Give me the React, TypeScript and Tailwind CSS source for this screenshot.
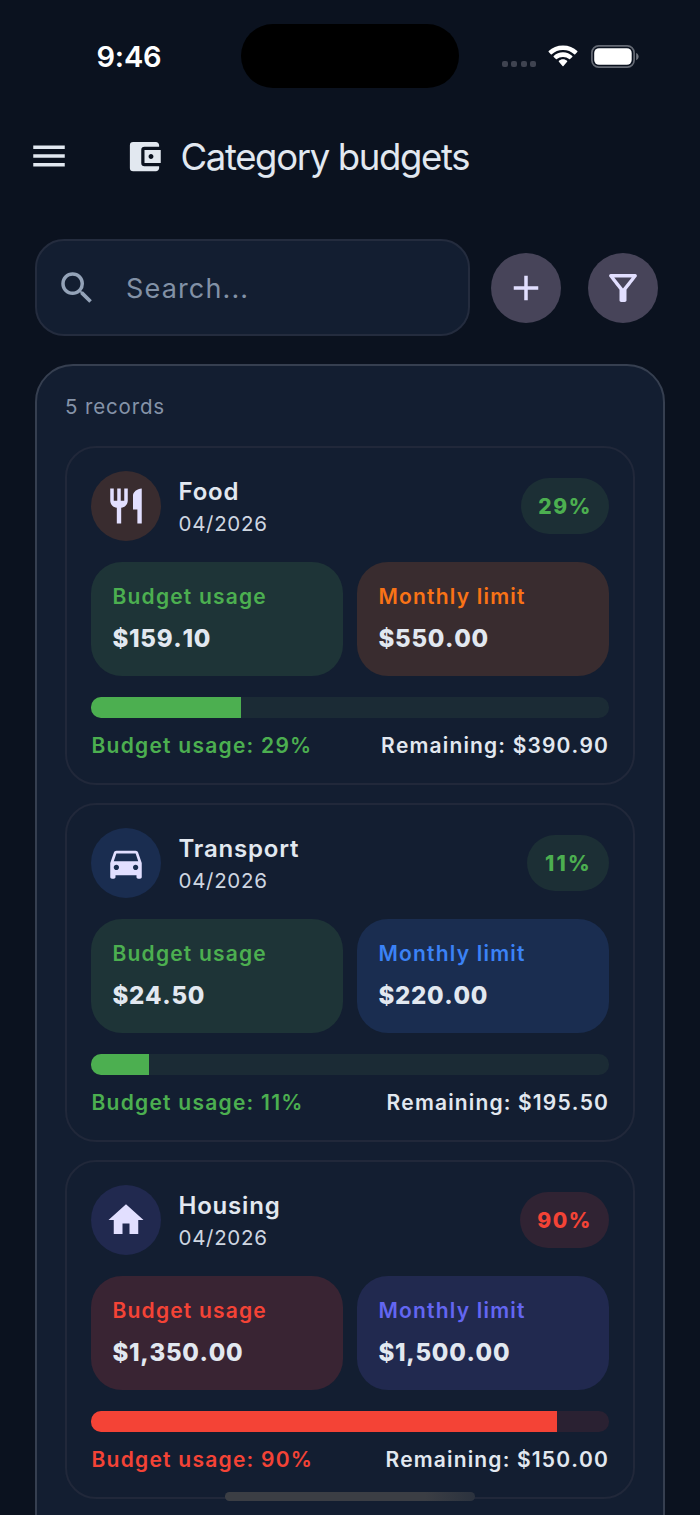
import {
  MdAccountBalanceWallet,
  MdAdd,
  MdDirectionsCar,
  MdHome,
  MdMenu,
  MdOutlineFilterAlt,
  MdRestaurant,
  MdSearch,
} from "react-icons/md";
import type { IconType } from "react-icons";

type Budget = {
  name: string;
  icon: IconType;
  percent: number;
  fill: number;
  used: string;
  limit: string;
  remaining: string;
  statusText: string;
  statusFill: string;
  statusTile: string;
  badge: string;
  badgeTracking: string;
  track: string;
  accentText: string;
  accentTile: string;
};

const green = {
  statusText: "text-[#4caf50]",
  statusFill: "bg-[#4caf50]",
  statusTile: "bg-[#1e3437]",
  badge: "bg-[#1c2f35]",
  track: "bg-[#1b2b35]",
};

const red = {
  statusText: "text-[#f44336]",
  statusFill: "bg-[#f44336]",
  statusTile: "bg-[#392433]",
  badge: "bg-[#302333]",
  track: "bg-[#2a2132]",
};

const budgets: Budget[] = [
  {
    name: "Food",
    icon: MdRestaurant,
    percent: 29,
    fill: 28.93,
    used: "$159.10",
    limit: "$550.00",
    remaining: "$390.90",
    ...green,
    badgeTracking: "tracking-[1.600px]",
    accentText: "text-[#f97316]",
    accentTile: "bg-[#392c2f]",
  },
  {
    name: "Transport",
    icon: MdDirectionsCar,
    percent: 11,
    fill: 11.14,
    used: "$24.50",
    limit: "$220.00",
    remaining: "$195.50",
    ...green,
    badgeTracking: "tracking-[2.300px]",
    accentText: "text-[#3b82f6]",
    accentTile: "bg-[#1a2d50]",
  },
  {
    name: "Housing",
    icon: MdHome,
    percent: 90,
    fill: 90,
    used: "$1,350.00",
    limit: "$1,500.00",
    remaining: "$150.00",
    ...red,
    badgeTracking: "tracking-[1.600px]",
    accentText: "text-[#6366f1]",
    accentTile: "bg-[#21294f]",
  },
];

function StatusBar() {
  return (
    <div className="relative flex h-28 items-center justify-between pr-[61px] pl-[96.500px] text-white">
      <span className="mt-0.5 text-[29px] leading-8 font-semibold tracking-[-0.2px]">9:46</span>
      <div className="absolute top-6 left-[241px] h-16 w-[218px] rounded-full bg-black" />
      <div className="flex items-center">
        <div className="mt-4 mr-3 flex gap-[3.3px]">
          <i className="size-[6px] rounded-[2px] bg-[#3f4350]" />
          <i className="size-[6px] rounded-[2px] bg-[#3f4350]" />
          <i className="size-[6px] rounded-[2px] bg-[#3f4350]" />
          <i className="size-[6px] rounded-[2px] bg-[#3f4350]" />
        </div>
        <svg className="mr-[13px] h-[22px] w-[30px]" viewBox="0 0 30 22" fill="currentColor">
          <path d="M15 .4C20.700 .4 25.800 2.400 29.300 6.100c.3.3.3.7 0 1l-2.100 2.100c-.3.3-.7.3-1 0A16.200 16.200 0 0 0 15 4.900 16.200 16.200 0 0 0 3.800 9.200c-.3.3-.7.3-1 0L.7 7.100c-.3-.3-.3-.7 0-1C4.200 2.400 9.300.4 15 .4z" />
          <path d="M15 7.300c3.600 0 6.900 1.400 9.300 3.700.3.3.3.7 0 1l-2.200 2.100c-.3.3-.7.3-1 0A9 9 0 0 0 15 11.900a9 9 0 0 0-6.100 2.200c-.3.3-.7.3-1 0L5.700 12c-.3-.3-.3-.7 0-1A13.400 13.400 0 0 1 15 7.300z" />
          <path d="M15 14.200c1.600 0 3 .6 4.100 1.500.3.3.3.7 0 1l-3.600 4.300c-.3.3-.7.3-1 0l-3.600-4.300c-.3-.3-.3-.7 0-1 1.100-.9 2.500-1.500 4.100-1.500z" />
        </svg>
        <svg className="h-[23px] w-12" viewBox="0 0 48 23">
          <rect x=".9" y=".9" width="42.200" height="21.200" rx="6.800" fill="none" stroke="#656a74" strokeWidth="1.700" />
          <rect x="3.200" y="3.200" width="37.500" height="16.600" rx="4.800" fill="#fff" />
          <path d="M45.200 8v7.200c1.500-.6 2.400-2 2.400-3.600S46.700 8.600 45.200 8z" fill="#747982" />
        </svg>
      </div>
    </div>
  );
}

function Tile({ label, value, text, bg }: { label: string; value: string; text: string; bg: string }) {
  return (
    <div className={`flex h-[114px] flex-1 flex-col rounded-[31px] pt-[21px] pl-[21.5px] ${bg}`}>
      <span className={`text-[21px] leading-7 font-semibold tracking-[1.2px] ${text}`}>{label}</span>
      <span className="mt-3.5 text-[24px] leading-7 font-extrabold tracking-[0.700px] [font-kerning:none]">{value}</span>
    </div>
  );
}

function BudgetCard({ budget }: { budget: Budget }) {
  const Icon = budget.icon;
  return (
    <section className="h-[339px] rounded-[31px] border-2 border-[#21283a] px-6 pt-[23px]">
      <div className="flex h-[70px] items-center">
        <div className={`flex size-[70px] items-center justify-center rounded-full text-[#e2dfff] ${budget.accentTile}`}>
          <Icon size={42} />
        </div>
        <div className="ml-[17.5px] flex flex-1 flex-col pt-1">
          <h2 className="text-[24px] leading-8 font-semibold tracking-[0.800px]">{budget.name}</h2>
          <span className="text-[20.500px] leading-8 tracking-[0.700px] text-[#ced6e1]">04/2026</span>
        </div>
        <span
          className={`flex h-14 items-center rounded-[28px] pt-px pr-[17px] pl-[17.5px] text-[21px] font-extrabold [font-kerning:none] ${budget.badgeTracking} ${budget.badge} ${budget.statusText}`}
        >
          {budget.percent}%
        </span>
      </div>
      <div className="mt-[21px] flex gap-3.5">
        <Tile label="Budget usage" value={budget.used} text={budget.statusText} bg={budget.statusTile} />
        <Tile label="Monthly limit" value={budget.limit} text={budget.accentText} bg={budget.accentTile} />
      </div>
      <div className={`mt-[21px] h-[21px] overflow-hidden rounded-[10px] ${budget.track}`}>
        <div className={`h-full ${budget.statusFill}`} style={{ width: `${budget.fill}%` }} />
      </div>
      <div className="mt-3 flex justify-between pl-[0.5px] text-[21px] leading-8 font-semibold [font-kerning:none]">
        <span className={`tracking-[1.250px] ${budget.statusText}`}>
          Budget usage: {budget.percent}%
        </span>
        <span className="tracking-[1.150px]">Remaining: {budget.remaining}</span>
      </div>
    </section>
  );
}

export default function App() {
  return (
    <div className="relative h-[1515px] w-[700px] overflow-hidden bg-[#0b121f] font-['Inter',sans-serif] text-[#e2e8f0]">
      <StatusBar />
      <header className="flex h-[88px] items-center pl-7">
        <MdMenu size={42} />
        <MdAccountBalanceWallet size={39} className="ml-[55px]" />
        <h1 className="mt-0.5 ml-[16.500px] text-[36.500px] leading-[44px] font-normal tracking-[-1.350px]">Category budgets</h1>
      </header>
      <div className="mt-[39px] flex h-[97px] items-center pl-[35px]">
        <div className="flex h-full w-[435px] items-center rounded-[29px] border-2 border-[#242c3e] bg-[#131e31] pl-[18.500px] text-[#94a3b8]">
          <MdSearch size={42} />
          <span className="mt-1 ml-[28.500px] text-[27px] tracking-[1.150px] text-[#8291a6]">Search...</span>
        </div>
        <button className="ml-[21px] flex size-[70px] items-center justify-center rounded-full bg-[#474459] text-[#e2dfff]">
          <MdAdd size={42} />
        </button>
        <button className="ml-[27px] flex size-[70px] items-center justify-center rounded-full bg-[#474459] text-[#e2dfff]">
          <MdOutlineFilterAlt size={42} />
        </button>
      </div>
      <main className="mt-7 ml-[35px] h-[1300px] w-[630px] rounded-[38px] border-2 border-[#363f50] bg-[#131e31] px-7 pt-[25px]">
        <p className="text-[20.500px] leading-8 tracking-[0.850px] text-[#8593a8]">5 records</p>
        <div className="mt-[23px] flex flex-col gap-[18px]">
          {budgets.map((budget) => (
            <BudgetCard key={budget.name} budget={budget} />
          ))}
        </div>
      </main>
      <div className="absolute top-[1492px] left-[225px] h-[9px] w-[250px] rounded-full bg-linear-to-r from-[#3b3e44] from-80% to-[#2b323e]" />
    </div>
  );
}
